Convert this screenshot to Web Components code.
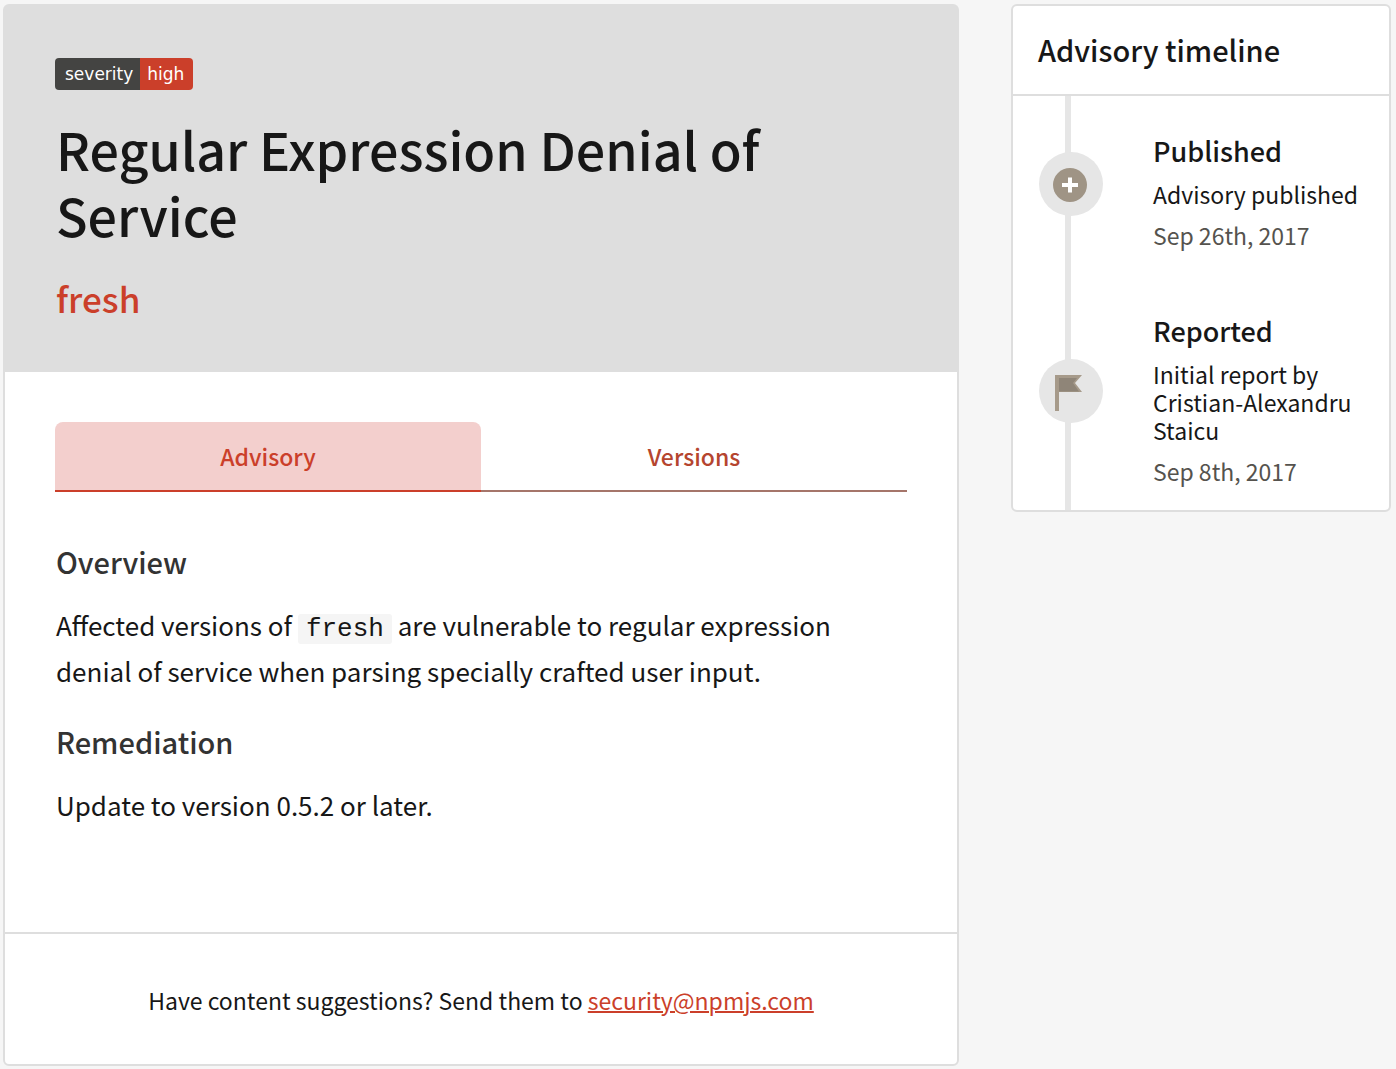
<!DOCTYPE html>
<html lang="en">
<head>
<meta charset="utf-8">
<title>Regular Expression Denial of Service</title>
<style>
  body {
    margin: 0;
    background: #f6f6f6;
    color: #171717;
    font-family: "Noto Sans CJK SC", "Open Sans", sans-serif;
    --line: #dedede;
    --soft: #e6e6e6;
    --red: #cb3f2a;
    --grey: #55534e;
  }
</style>
</head>
<body>
<advisory-page>
  <advisory-card>
    <advisory-header slot="header" title-text="Regular Expression Denial of Service" package="fresh">
      <severity-badge level="high"></severity-badge>
    </advisory-header>
    <advisory-tabs></advisory-tabs>
    <advisory-section heading="Overview">Affected versions of <inline-code>fresh</inline-code> are vulnerable to regular expression denial of service when parsing specially crafted user input.</advisory-section>
    <advisory-section heading="Remediation">Update to version 0.5.2 or later.</advisory-section>
    <advisory-footer slot="footer"></advisory-footer>
  </advisory-card>
  <advisory-timeline slot="aside" heading="Advisory timeline">
    <timeline-event heading="Published" date="Sep 26th, 2017">
      <svg slot="icon" width="36" height="36" viewBox="0 0 36 36" aria-hidden="true"><circle cx="17" cy="19" r="17" fill="#9f9485"/><path d="M15 11.500h4v5.500h6v4h-6v5.500h-4V21H9v-4h6z" fill="#fff"/></svg>
      Advisory published
    </timeline-event>
    <timeline-event heading="Reported" date="Sep 8th, 2017">
      <svg slot="icon" width="36" height="36" viewBox="0 0 36 36" aria-hidden="true"><path d="M2 2H29L22 10L29 19H6V38H2z" fill="#a69a8a"/><path d="M6 5H24L20 10L26 18.500H6z" fill="#8f8578"/></svg>
      Initial report by Cristian-Alexandru Staicu
    </timeline-event>
  </advisory-timeline>
</advisory-page>
<script>
  function define(name, render) {
    customElements.define(name, class extends HTMLElement {
      constructor() {
        super();
        this.attachShadow({ mode: "open" });
      }
      connectedCallback() {
        this.shadowRoot.innerHTML = render(this);
      }
    });
  }

  define("advisory-page", () => `
    <style>
      :host { display: flex; align-items: flex-start; gap: 52px; padding: 4px 5px 4px 3px; }
      main { flex: 1; min-width: 0; }
      aside { flex: 0 0 380px; }
    </style>
    <main><slot></slot></main>
    <aside><slot name="aside"></slot></aside>`);

  define("advisory-card", () => `
    <style>
      :host { display: block; background: #fff; border: 2px solid var(--line); border-radius: 6px; }
      .body { padding: 50px 50px 104px; }
    </style>
    <slot name="header"></slot>
    <div class="body"><slot></slot></div>
    <slot name="footer"></slot>`);

  define("advisory-header", el => `
    <style>
      :host { display: block; padding: 52px 50px 48px; background: var(--line); }
      h1, h2 { padding-left: 1px; font-weight: 500; }
      h1 { margin: 26px 0 0; font-size: 52px; line-height: 66px; }
      h2 { margin: 24px 0 0; font-size: 35px; line-height: 52px; }
      a { color: var(--red); text-decoration: none; }
    </style>
    <slot></slot>
    <h1>${el.getAttribute("title-text")}</h1>
    <h2><a href="#package">${el.getAttribute("package")}</a></h2>`);

  define("severity-badge", el => `
    <style>
      :host { display: flex; color: #fff; font: 17px/32px "DejaVu Sans", sans-serif; }
      .name { padding: 0 7px 0 10px; background: #444442; border-radius: 4px 0 0 4px; }
      .level { padding: 0 9px 0 7px; background: var(--red); border-radius: 0 4px 4px 0; }
    </style>
    <span class="name">severity</span><span class="level">${el.getAttribute("level")}</span>`);

  define("advisory-tabs", () => `
    <style>
      :host { display: block; }
      nav { display: flex; }
      a { flex: 1; box-sizing: border-box; height: 70px; border-bottom: 2px solid #a5756a; color: #b5452f;
          font-size: 23px; line-height: 68px; font-weight: 500; text-align: center; text-decoration: none; }
      a[aria-current] { border-color: var(--red); border-radius: 8px 8px 0 0; background: #f3cfcd; color: var(--red); }
    </style>
    <nav aria-label="Advisory">
      <a href="#advisory" aria-current="page">Advisory</a>
      <a href="#versions">Versions</a>
    </nav>`);

  define("advisory-section", el => `
    <style>
      :host { display: block; }
      h3, p { padding-left: 1px; }
      h3 { margin: 46px 0 0; font-size: 29px; line-height: 46px; font-weight: 500; color: #333; }
      p { margin: 18px 0 0; font-size: 26px; line-height: 46px; }
      :host(:not(:first-of-type)) h3 { margin-top: 24px; }
    </style>
    <h3>${el.getAttribute("heading")}</h3>
    <p><slot></slot></p>`);

  define("inline-code", () => `
    <style>
      code { padding: 0 8px; border-radius: 3px; background: #f5f5f5; font: 26px/30px "Liberation Mono", monospace; }
    </style>
    <code><slot></slot></code>`);

  define("advisory-footer", () => `
    <style>
      :host { display: block; padding: 51px 50px 49px; border-top: 2px solid var(--line); font-size: 23px; line-height: 30px; text-align: center; }
      a { color: var(--red); text-decoration-thickness: 2px; }
    </style>
    Have content suggestions? Send them to <a href="mailto:security@npmjs.com">security@npmjs.com</a>`);

  define("advisory-timeline", el => `
    <style>
      :host { display: block; background: #fff; border: 2px solid var(--line); border-radius: 6px; }
      h2 { margin: 0; padding: 21px 25px 23px; border-bottom: 2px solid var(--line); font-size: 29px; line-height: 44px; font-weight: 500; }
      div { background: linear-gradient(var(--soft), var(--soft)) 52px 0 / 6px 100% no-repeat; }
    </style>
    <h2>${el.getAttribute("heading")}</h2>
    <div><slot></slot></div>`);

  define("timeline-event", el => `
    <style>
      :host { display: flex; align-items: center; gap: 50px; padding: 0 26px; }
      .marker { display: flex; flex: 0 0 64px; height: 64px; margin-bottom: 4px; align-items: center; justify-content: center; border-radius: 50%; background: var(--soft); }
      ::slotted(svg) { overflow: visible; }
      .text { flex: 1; padding: 37px 0 27px; font-size: 23px; line-height: 28px; }
      :host(:last-child) .text { padding-bottom: 25px; }
      h3 { margin: 0 0 11px; font-size: 27px; line-height: 36px; font-weight: 500; }
      p { margin: 0 0 13px; }
      time { display: block; color: var(--grey); }
    </style>
    <div class="marker"><slot name="icon"></slot></div>
    <div class="text">
      <h3>${el.getAttribute("heading")}</h3>
      <p><slot></slot></p>
      <time>${el.getAttribute("date")}</time>
    </div>`);
</script>
</body>
</html>
